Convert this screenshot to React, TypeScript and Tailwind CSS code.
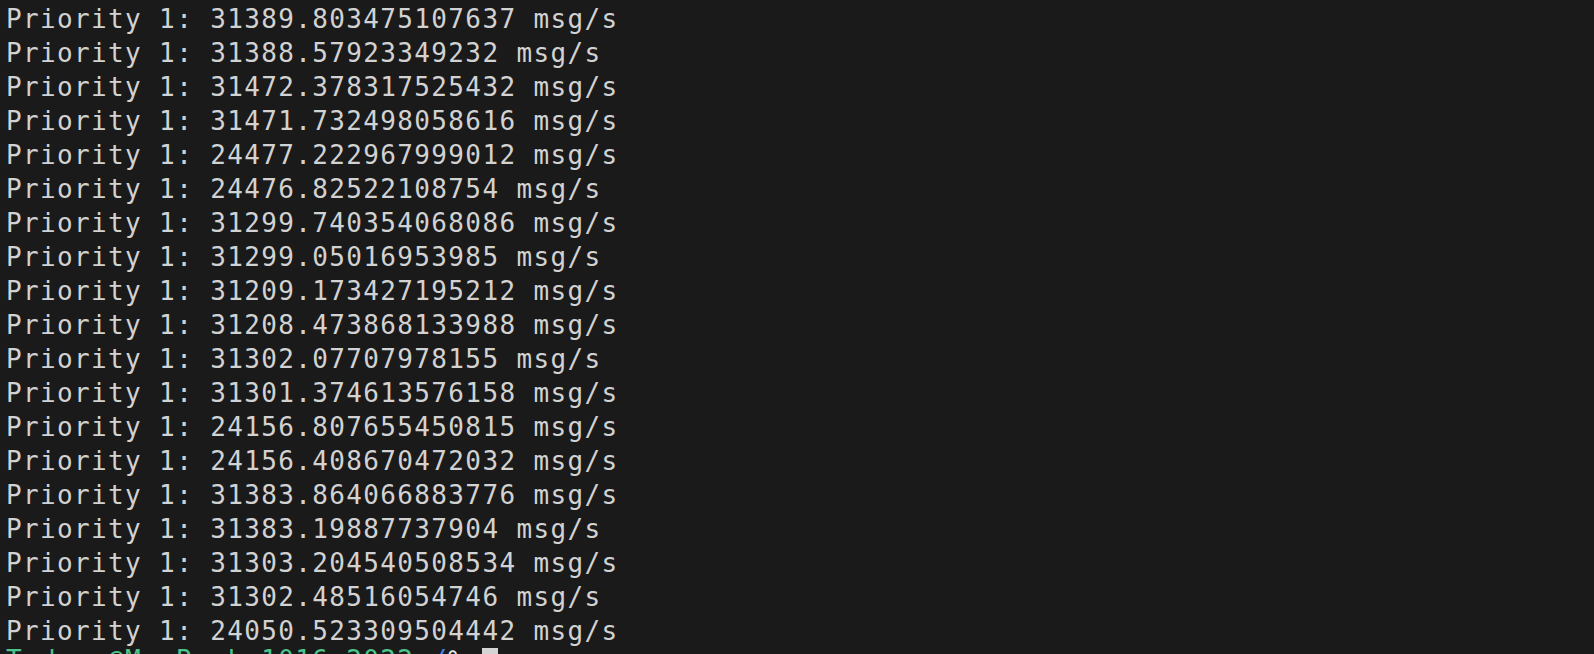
const rates = [
  "31389.803475107637",
  "31388.57923349232",
  "31472.378317525432",
  "31471.732498058616",
  "24477.222967999012",
  "24476.82522108754",
  "31299.740354068086",
  "31299.05016953985",
  "31209.173427195212",
  "31208.473868133988",
  "31302.07707978155",
  "31301.374613576158",
  "24156.807655450815",
  "24156.408670472032",
  "31383.864066883776",
  "31383.19887737904",
  "31303.204540508534",
  "31302.48516054746",
  "24050.523309504442",
]

export default function App() {
  return (
    <div className="h-screen w-full overflow-hidden bg-[#1a1a1a] pl-[6px] pt-[2px] font-['DejaVu_Sans_Mono',monospace] text-[26px] leading-[34px] tracking-[1.36px] text-[#d2d2d2] whitespace-pre">
      {rates.map((r, i) => (
        <div key={i}>Priority 1: {r} msg/s</div>
      ))}
      {/* prompt line, only its top shows at the bottom edge */}
      <div className="flex items-start">
        <span className="leading-[24px] text-[#4cc48a]">Tadeas@MacBook-1016-2022</span>
        <span className="leading-[24px]"> </span>
        <span className="leading-[24px] text-[#3f82e6]">/</span>
        <span className="leading-[24px] text-[#e6e6e6]">%</span>
        <span className="leading-[24px]"> </span>
        <span className="inline-block h-[34px] w-[16px] bg-[#d4d4d4]" />
      </div>
    </div>
  )
}
